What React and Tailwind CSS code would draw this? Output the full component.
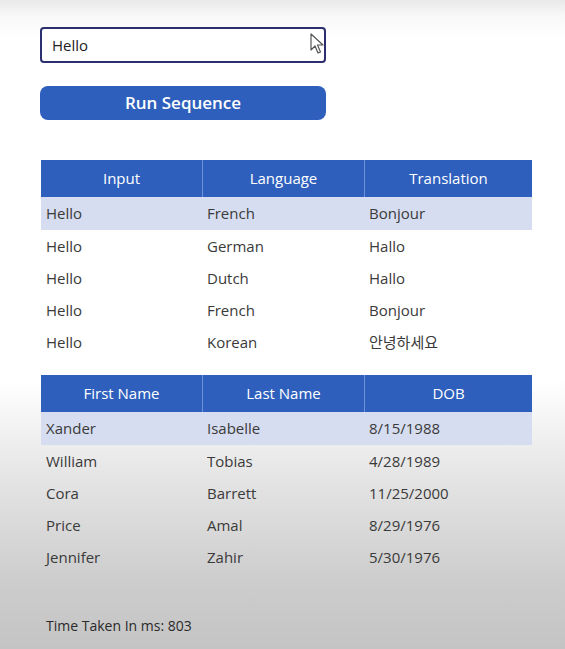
const langRows = [
  ["Hello", "French", "Bonjour"],
  ["Hello", "German", "Hallo"],
  ["Hello", "Dutch", "Hallo"],
  ["Hello", "French", "Bonjour"],
  ["Hello", "Korean", "안녕하세요"],
];

const people = [
  ["Xander", "Isabelle", "8/15/1988"],
  ["William", "Tobias", "4/28/1989"],
  ["Cora", "Barrett", "11/25/2000"],
  ["Price", "Amal", "8/29/1976"],
  ["Jennifer", "Zahir", "5/30/1976"],
];

const DataTable = ({ headers, rows }) => {
  return (
    <div className="w-[491px]">
      {/* Header */}
      <div className="grid grid-cols-[161px_162px_168px] h-[37px] bg-[#2f5fbd] text-white text-[15px]">
        {headers.map((h, i) => (
          <div
            key={h}
            className={
              "flex items-center justify-center " +
              (i > 0 ? "border-l border-[#6f93d8]" : "")
            }
          >
            {h}
          </div>
        ))}
      </div>

      {/* Rows */}
      {rows.map((row, r) => (
        <div
          key={r}
          className={
            "grid grid-cols-[161px_162px_168px] text-[15px] text-[#3a3a3a] " +
            (r === 0 ? "h-[33px] bg-[#d6ddf0]" : "h-[32px]")
          }
        >
          {row.map((cell, c) => (
            <div key={c} className="flex items-center pl-[5px]">
              {cell}
            </div>
          ))}
        </div>
      ))}
    </div>
  );
};

const App = () => {
  return (
    <div
      className="min-h-[649px] w-[565px] pl-[40px] pt-[27px] bg-[linear-gradient(to_bottom,#e9e9e9_0px,#f8f8f8_16px,#ffffff_40px,#ffffff_380px,#e4e4e4_480px,#cdcdcd_580px,#c4c4c4_649px)]"
      style={{ fontFamily: '"Open Sans", "Noto Sans CJK KR", sans-serif' }}
    >
      {/* Text input */}
      <div className="relative w-[286px] h-[36px] bg-white border-2 border-[#2b2f6e] rounded-[4px] flex items-center pl-[10px] text-[15px] text-[#222]">
        Hello
        {/* mouse cursor */}
        <svg
          className="absolute right-[-2px] top-[4px]"
          width="16"
          height="22"
          viewBox="0 0 16 22"
        >
          <path
            d="M1 1 L1 17 L5 13 L8 20 L10.5 19 L7.5 12 L13 12 Z"
            fill="#ffffff"
            stroke="#555"
            strokeWidth="1.2"
            strokeLinejoin="round"
          />
        </svg>
      </div>

      {/* Button */}
      <button className="mt-[23px] w-[286px] h-[34px] rounded-[8px] bg-[#2f5fbd] text-white text-[17px] font-semibold flex items-center justify-center">
        Run Sequence
      </button>

      {/* Translations table */}
      <div className="mt-[40px] ml-[1px]">
        <DataTable headers={["Input", "Language", "Translation"]} rows={langRows} />
      </div>

      {/* People table */}
      <div className="mt-[17px] ml-[1px]">
        <DataTable headers={["First Name", "Last Name", "DOB"]} rows={people} />
      </div>

      {/* Footer */}
      <p className="mt-[42px] ml-[6px] text-[14px] text-[#2a2a2a]">
        Time Taken In ms: 803
      </p>
    </div>
  );
};

export default App;
